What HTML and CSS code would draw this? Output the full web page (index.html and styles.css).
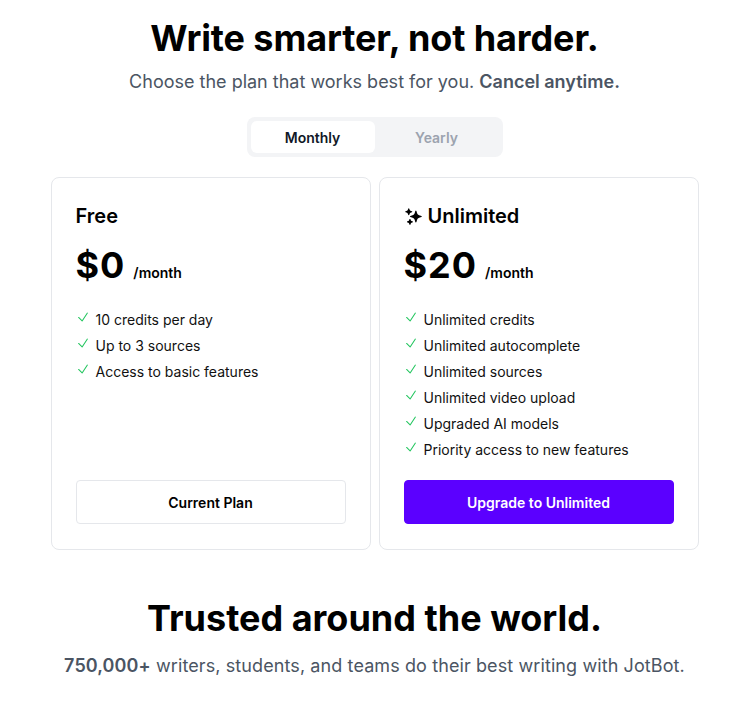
FILE: index.html
```html
<!DOCTYPE html>
<html>
<head>
<meta charset="utf-8">
<link rel="stylesheet" href="styles.css">
</head>
<body>
<main class="page">
  <section class="hero">
    <h1 class="title">Write smarter, not harder.</h1>
    <p class="subtitle">Choose the plan that works best for you. <strong>Cancel anytime.</strong></p>
    <div class="toggle">
      <span class="tab tab-active">Monthly</span>
      <span class="tab">Yearly</span>
    </div>
  </section>

  <section class="plans">
    <div class="card">
      <h2 class="plan-name">Free</h2>
      <div class="price"><span class="amount">$0</span><span class="per">/month</span></div>
      <ul class="features">
        <li><svg class="check" viewBox="0 0 24 24"><path d="M4.5 12.75l6 6 9-13.5"/></svg>10 credits per day</li>
        <li><svg class="check" viewBox="0 0 24 24"><path d="M4.5 12.75l6 6 9-13.5"/></svg>Up to 3 sources</li>
        <li><svg class="check" viewBox="0 0 24 24"><path d="M4.5 12.75l6 6 9-13.5"/></svg>Access to basic features</li>
      </ul>
      <button class="btn btn-outline">Current Plan</button>
    </div>
    <div class="card">
      <h2 class="plan-name"><svg class="sparkle" viewBox="0 0 24 24"><path d="M9 4.5a.75.75 0 01.721.544l.813 2.846a3.75 3.75 0 002.576 2.576l2.846.813a.75.75 0 010 1.442l-2.846.813a3.750 3.750 0 00-2.576 2.576l-.813 2.846a.75.75 0 01-1.442 0l-.813-2.846a3.75 3.75 0 00-2.576-2.576l-2.846-.813a.75.75 0 010-1.442l2.846-.813A3.75 3.75 0 007.466 7.89l.813-2.846A.75.75 0 019 4.5zM18 1.5a.75.75 0 01.728.568l.258 1.036c.236.94.97 1.674 1.910 1.910l1.036.258a.75.75 0 010 1.456l-1.036.258c-.94.236-1.674.97-1.910 1.910l-.258 1.036a.75.75 0 01-1.456 0l-.258-1.036a2.625 2.625 0 00-1.910-1.910l-1.036-.258a.75.75 0 010-1.456l1.036-.258a2.625 2.625 0 001.910-1.910l.258-1.036A.75.75 0 0118 1.5zM16.5 15a.75.75 0 01.712.513l.394 1.183c.15.447.5.799.948.948l1.183.395a.75.75 0 010 1.422l-1.183.395c-.447.15-.799.5-.948.948l-.395 1.183a.75.75 0 01-1.422 0l-.395-1.183a1.5 1.5 0 00-.948-.948l-1.183-.395a.75.75 0 010-1.422l1.183-.395c.447-.15.799-.5.948-.948l.395-1.183A.75.75 0 0116.5 15z"/></svg>Unlimited</h2>
      <div class="price"><span class="amount">$20</span><span class="per">/month</span></div>
      <ul class="features">
        <li><svg class="check" viewBox="0 0 24 24"><path d="M4.5 12.75l6 6 9-13.5"/></svg>Unlimited credits</li>
        <li><svg class="check" viewBox="0 0 24 24"><path d="M4.5 12.75l6 6 9-13.5"/></svg>Unlimited autocomplete</li>
        <li><svg class="check" viewBox="0 0 24 24"><path d="M4.5 12.75l6 6 9-13.5"/></svg>Unlimited sources</li>
        <li><svg class="check" viewBox="0 0 24 24"><path d="M4.5 12.75l6 6 9-13.5"/></svg>Unlimited video upload</li>
        <li><svg class="check" viewBox="0 0 24 24"><path d="M4.5 12.75l6 6 9-13.5"/></svg>Upgraded AI models</li>
        <li><svg class="check" viewBox="0 0 24 24"><path d="M4.5 12.75l6 6 9-13.5"/></svg>Priority access to new features</li>
      </ul>
      <button class="btn btn-primary">Upgrade to Unlimited</button>
    </div>
  </section>

  <section class="trust">
    <h2 class="title">Trusted around the world.</h2>
    <p class="subtitle trust-sub"><strong>750,000+</strong> writers, students, and teams do their best writing with JotBot.</p>
  </section>
</main>
</body>
</html>
```

FILE: styles.css
```css
* { box-sizing: border-box; }
html, body { margin: 0; padding: 0; background: #fff; }
body {
  font-family: Inter, "Noto Sans", "Liberation Sans", sans-serif;
  color: #000;
}
.page {
  display: flex;
  flex-direction: column;
  align-items: center;
  padding-top: 18px;
}
.hero {
  display: flex;
  flex-direction: column;
  align-items: center;
}
.title {
  margin: 0;
  font-size: 36px;
  line-height: 40px;
  font-weight: 700;
  letter-spacing: -0.1px;
  color: #000;
}
.subtitle {
  margin: 10px 0 0;
  font-size: 18px;
  line-height: 28px;
  color: #4b5563;
}
.subtitle strong { font-weight: 600; }
.toggle {
  margin-top: 21px;
  width: 256px;
  height: 40px;
  padding: 4px;
  background: #f3f4f6;
  border-radius: 8px;
  display: grid;
  grid-template-columns: 1fr 1fr;
}
.tab {
  display: flex;
  align-items: center;
  justify-content: center;
  font-size: 14px;
  font-weight: 600;
  color: #9ca3af;
  border-radius: 6px;
}
.tab-active {
  background: #fff;
  color: #111827;
}
.plans {
  margin-top: 20px;
  display: grid;
  grid-template-columns: 320px 320px;
  gap: 8px;
}
.card {
  border: 1px solid #e5e7eb;
  border-radius: 8px;
  padding: 24px 24px 25px;
  display: flex;
  flex-direction: column;
  height: 373px;
}
.plan-name {
  margin: 0;
  font-size: 20px;
  line-height: 28px;
  font-weight: 600;
  display: flex;
  align-items: center;
  gap: 5px;
}
.sparkle {
  width: 19px;
  height: 19px;
  fill: #000;
  transform: scaleX(-1);
}
.price {
  margin-top: 15px;
  display: flex;
  align-items: baseline;
  gap: 8px;
}
.amount {
  font-size: 36px;
  line-height: 40px;
  font-weight: 700;
  letter-spacing: 1px;
}
.per {
  font-size: 14px;
  font-weight: 600;
}
.features {
  list-style: none;
  margin: 25px 0 0;
  padding: 0;
  display: flex;
  flex-direction: column;
  gap: 6px;
  flex: 1;
}
.features li {
  display: flex;
  align-items: center;
  font-size: 14px;
  line-height: 20px;
  color: #111;
}
.check {
  width: 14px;
  height: 14px;
  margin-right: 6px;
  margin-top: -6px;
  fill: none;
  stroke: #22c55e;
  stroke-width: 1.8;
  stroke-linecap: round;
  stroke-linejoin: round;
}
.btn {
  height: 44px;
  border-radius: 4px;
  font-family: inherit;
  font-size: 14px;
  font-weight: 600;
  cursor: pointer;
}
.btn-outline {
  background: #fff;
  border: 1px solid #e5e7eb;
  color: #000;
}
.btn-primary {
  background: #5b00ff;
  border: 1px solid #5b00ff;
  color: #fff;
}
.trust {
  margin-top: 48px;
  display: flex;
  flex-direction: column;
  align-items: center;
}
.trust .title { letter-spacing: 0; }
.trust-sub { margin-top: 14px; letter-spacing: 0.1px; }
```
